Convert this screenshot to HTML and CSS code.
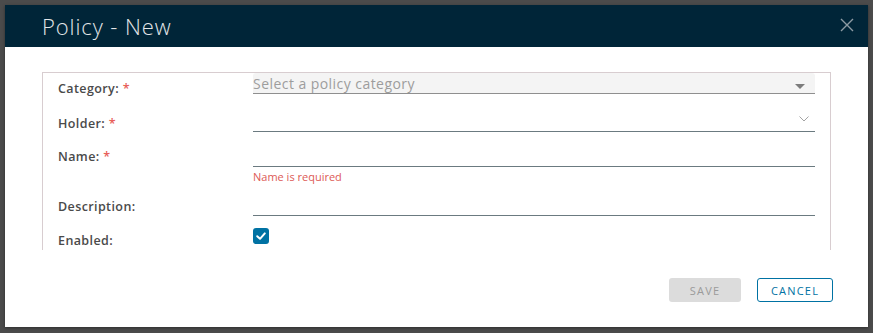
FILE: index.html
```html
<!DOCTYPE html>
<html lang="en">
<head>
  <meta charset="UTF-8">
  <title>Policy - New</title>
  <link rel="stylesheet" href="styles.css">
</head>
<body>
  <div class="modal">
    <div class="modal-header">
      <h1>Policy - New</h1>
      <button class="close-button" aria-label="Close">
        <svg viewBox="0 0 14 14" width="14" height="14">
          <path d="M1 1L13 13M13 1L1 13" stroke="currentColor" stroke-width="1.4" fill="none"/>
        </svg>
      </button>
    </div>

    <div class="modal-body">
      <form class="policy-form">
        <div class="form-row row-category">
          <label>Category: <span class="required">*</span></label>
          <div class="control">
            <div class="select select-filled">
              <span class="placeholder">Select a policy category</span>
              <span class="caret"></span>
            </div>
          </div>
        </div>

        <div class="form-row row-holder">
          <label>Holder: <span class="required">*</span></label>
          <div class="control">
            <div class="select">
              <svg class="chevron" viewBox="0 0 10 6" width="10" height="6">
                <path d="M0.5 0.5L5 5L9.5 0.5" stroke="currentColor" stroke-width="1" fill="none"/>
              </svg>
            </div>
          </div>
        </div>

        <div class="form-row row-name">
          <label>Name: <span class="required">*</span></label>
          <div class="control">
            <div class="text-input"></div>
            <div class="error-text">Name is required</div>
          </div>
        </div>

        <div class="form-row row-description">
          <label>Description:</label>
          <div class="control">
            <div class="text-input"></div>
          </div>
        </div>

        <div class="form-row row-enabled">
          <label>Enabled:</label>
          <div class="control">
            <span class="checkbox">
              <svg viewBox="0 0 16 16" width="16" height="16">
                <path d="M4.2 8.2L7 10.8L11.8 5.4" stroke="#fff" stroke-width="2" fill="none" stroke-linecap="round" stroke-linejoin="round"/>
              </svg>
            </span>
          </div>
        </div>
      </form>

      <div class="modal-footer">
        <button class="btn btn-disabled" disabled>Save</button>
        <button class="btn btn-outline">Cancel</button>
      </div>
    </div>
  </div>
</body>
</html>
```

FILE: styles.css
```css
* {
  margin: 0;
  padding: 0;
  box-sizing: border-box;
}

body {
  font-family: "Open Sans", "Liberation Sans", sans-serif;
  background-color: #4b4b4b;
  padding: 5px;
  height: 100vh;
  overflow: hidden;
}

.modal {
  width: 863px;
  height: 322px;
  background: #fff;
  box-shadow: 0 1px 3px rgba(0, 0, 0, 0.4);
}

.modal-header {
  height: 42px;
  background: #002538;
  display: flex;
  align-items: center;
  justify-content: space-between;
  padding: 0 14px 0 37px;
}

.modal-header h1 {
  font-size: 22px;
  font-weight: 300;
  color: #e3e6e8;
  letter-spacing: 0.9px;
  margin-top: -1px;
}

.close-button {
  background: none;
  border: none;
  color: #8d9ba4;
  width: 14px;
  height: 14px;
  display: flex;
  margin-top: -2px;
}

.modal-body {
  padding: 25px 35px 0 37px;
}

.policy-form {
  width: 789px;
  height: 178px;
  border: 1px solid #d8cdd0;
  border-bottom: none;
  padding: 0 15px;
  overflow: hidden;
}

.form-row {
  display: flex;
  align-items: flex-start;
}

.form-row label {
  width: 195px;
  flex-shrink: 0;
  font-size: 12.5px;
  font-weight: 600;
  letter-spacing: 0.4px;
  line-height: 18px;
  color: #4a4a4a;
}

.required {
  color: #e8605a;
}

.control {
  flex: 1;
}

.row-category { height: 38px; }
.row-category label { padding-top: 7px; }

.row-holder { height: 35px; }
.row-holder label { padding-top: 4px; }

.row-name { height: 49px; }
.row-name label { padding-top: 2px; }

.row-description { height: 34px; }
.row-description label { padding-top: 3px; }

.row-enabled label { padding-top: 3px; }

.select,
.text-input {
  height: 21px;
  border-bottom: 1px solid #6b7a80;
  position: relative;
  display: flex;
  align-items: center;
}

.select-filled {
  background: #f4f4f4;
  border-bottom-color: #8f8f8f;
  border-radius: 3px 3px 0 0;
}

.placeholder {
  font-size: 14px;
  letter-spacing: 0.45px;
  color: #9d9d9d;
  line-height: 18px;
  margin-top: 1px;
}

.caret {
  position: absolute;
  right: 10px;
  top: 11px;
  width: 0;
  height: 0;
  border-left: 5px solid transparent;
  border-right: 5px solid transparent;
  border-top: 5px solid #7c7c7c;
}

.chevron {
  position: absolute;
  right: 6px;
  top: 5px;
  color: #a3a3a3;
}

.error-text {
  font-size: 11px;
  line-height: 14px;
  color: #dd5a56;
  margin-top: 3px;
}

.checkbox {
  display: block;
  width: 16px;
  height: 16px;
  margin-top: -1px;
  border-radius: 3px;
  background: #0072a3;
}

.checkbox svg {
  display: block;
}

.modal-footer {
  display: flex;
  justify-content: flex-end;
  gap: 16px;
  margin-top: 28px;
}

.btn {
  height: 24px;
  font-family: inherit;
  font-size: 11px;
  font-weight: 400;
  letter-spacing: 1.2px;
  text-transform: uppercase;
  border-radius: 3px;
  background: #fff;
}

.btn-disabled {
  width: 72px;
  background: #dcdcdc;
  border: none;
  color: #9a9a9a;
}

.btn-outline {
  width: 76px;
  border: 1px solid #0072a3;
  color: #0072a3;
}
```
